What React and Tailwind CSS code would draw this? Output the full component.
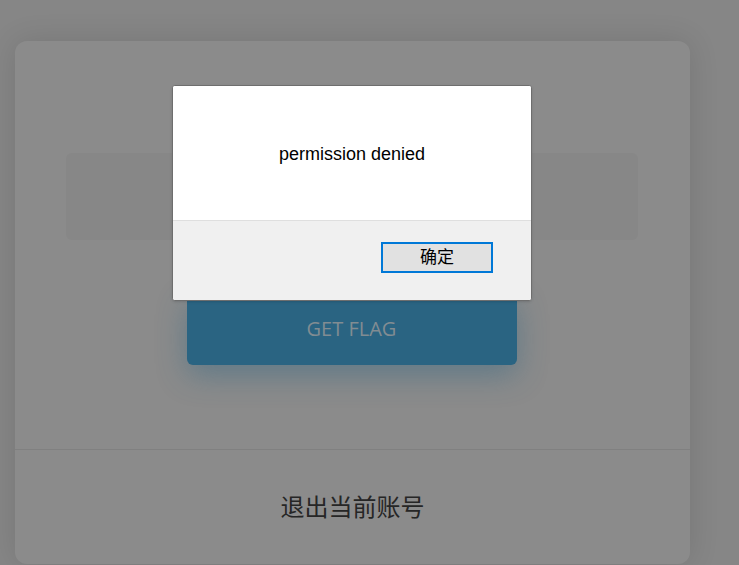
import { useState } from 'react';

const AlertDialog = ({ message, onClose }) => {
  return (
    <div className="absolute left-[172px] top-[85px] w-[360px] h-[216px] border border-[#6e6e6e] rounded-[3px] overflow-hidden flex flex-col bg-white shadow-sm">
      <div className="h-[135px] shrink-0 flex items-center justify-center bg-white border-b border-[#dfdfdf]">
        <p className="text-[18px] text-black font-['Liberation_Sans',Arial,sans-serif] mt-[2px]">{message}</p>
      </div>
      <div className="flex-1 bg-[#f0f0f0] flex items-start justify-end pt-[21px] pr-[38px]">
        <button
          onClick={onClose}
          className="w-[112px] h-[31px] border-2 border-[#0078d7] bg-[#e1e1e1] text-[17px] text-black font-['Noto_Sans_CJK_SC',sans-serif] leading-none pb-[4px]"
        >
          确定
        </button>
      </div>
    </div>
  )
}

export default function App() {
  const [showAlert, setShowAlert] = useState(true);

  return (
    <div className="relative w-full h-[565px] overflow-hidden bg-[#868686] font-['Open_Sans','Noto_Sans_CJK_SC',sans-serif]">
      <div className="pl-[15px] pt-[41px] pr-[49px]">
        <div className="h-[523px] bg-[#8b8b8b] rounded-[12px] shadow-[0_0_30px_rgba(0,0,0,0.12)] flex flex-col">
          <div className="flex-1 flex flex-col items-center pt-[112px]">
            <div className="w-[572px] h-[87px] rounded-[6px] bg-[#878787] -ml-[1px]" />
            <button
              onClick={() => setShowAlert(true)}
              className="mt-[53px] -ml-[2px] w-[330px] h-[72px] rounded-[6px] bg-[#2a6482] text-[#818c92] text-[20px] shadow-[0_10px_30px_rgba(42,100,130,0.45)]"
            >
              GET FLAG
            </button>
          </div>
          <div className="h-[115px] border-t border-[#808080] flex items-center justify-center">
            <span className="text-[24px] text-[#262626] font-['Noto_Sans_CJK_SC',sans-serif] -mt-[2px]">退出当前账号</span>
          </div>
        </div>
      </div>
      {showAlert && <AlertDialog message="permission denied" onClose={() => setShowAlert(false)} />}
    </div>
  )
}
